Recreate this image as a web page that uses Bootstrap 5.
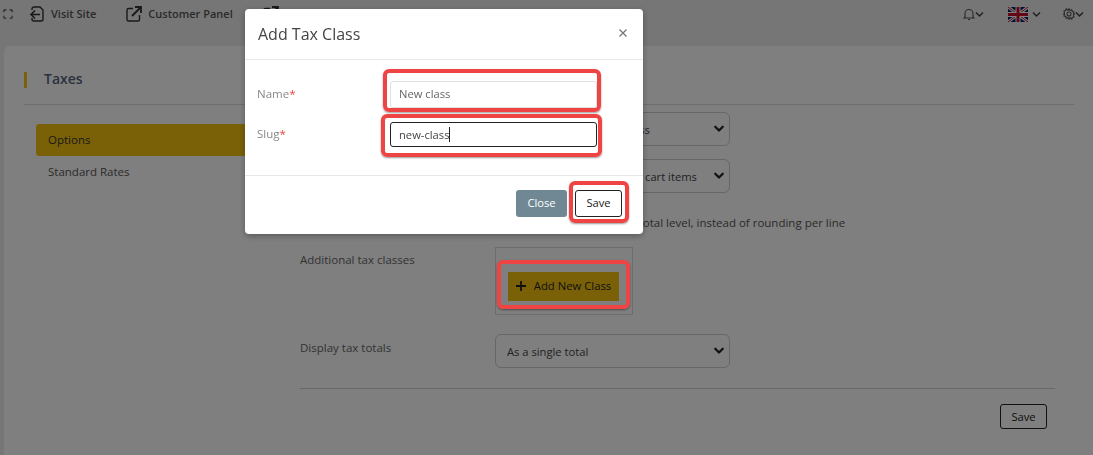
<!DOCTYPE html>
<html lang="en">
<head>
<meta charset="utf-8">
<title>Taxes</title>
<link href="https://cdn.jsdelivr.net/npm/bootstrap@5.3.0/dist/css/bootstrap.min.css" rel="stylesheet">
<style>
html,body{height:455px;overflow:hidden}
body{background:#ececec;font-family:"Open Sans",sans-serif;font-size:11.5px;color:#555}
.topstrip{height:46px;padding:0 9px 18px 3px;color:#555}
.topstrip svg{display:block;flex:none}
.toplink{font-weight:600;font-size:11px;color:#555;text-decoration:none;gap:6px}
.toplink.one{margin-left:16px;gap:7px}
.toplink.two{margin-left:30px}
.toplink.three{margin-left:30px}
.topright{margin-left:auto}
.sheet{background:#fff;margin-left:4px;height:409px;border-radius:6px 0 0 0;padding:26px 19px 0 20px}
.sheet-title{border-bottom:1px solid #dcdcdc;padding-bottom:16px;box-sizing:content-box;height:16px}
.sheet-title h1{font-size:14px;font-weight:600;margin:0;padding:0 0 2px 17px;height:16px;border-left:3px solid #f5c30f;color:#56647a;line-height:14px}
.side{width:245px;padding-left:12px;padding-top:19px;flex:none}
.side a{display:block;height:32px;line-height:32px;padding-left:12px;color:#555;text-decoration:none;border-radius:3px 0 0 3px}
.side a.on{background:#f5c30f;color:#333}
.formcol{width:755px;margin-left:31px;padding-top:7px}
.frow{display:flex}
.frow>label{width:195px;flex:none;color:#666;margin:0}
.sel{width:235px;height:34px;font-size:11.2px;color:#444;padding:2px 20px 0 11px;border-color:#cfcfcf;background-size:14px 12px;background-position:right 3px center;background-image:url("data:image/svg+xml,%3csvg xmlns='http://www.w3.org/2000/svg' viewBox='0 0 16 16'%3e%3cpath fill='none' stroke='%23222' stroke-linecap='round' stroke-linejoin='round' stroke-width='3' d='m3 5 5 5 5-5'/%3e%3c/svg%3e")}
.sel.tight{padding-left:3px}
.checktext{height:16px;line-height:16px;color:#555;padding-left:195px;margin-top:22px;white-space:nowrap;display:flex;align-items:center}
.checktext .form-check-input{margin:0 40px 0 0;width:13px;height:13px;flex:none}
.classbox{width:138px;height:68px;border:1px solid #d8d8d8;padding:24px 0 0 12px}
.addbtn{width:111px;height:29px;background:#f5c30f;color:#222;border:0;border-radius:0;font-size:11.3px;font-weight:500;padding:0 0 2px;line-height:27px;gap:8px}
.outbtn{height:25px;width:47px;padding:0;font-size:11.2px;color:#222;background:#fff;border:1px solid #222;border-radius:3px;line-height:23px}
.divider{height:1px;background:#d0d0d0;margin:20px 0 15px}
.dlg{width:398px;margin:9px 0 0 245px}
.dlg .modal-content{border-radius:4px;border:0;height:225px;box-shadow:0 2px 6px rgba(0,0,0,.3)}
.dlg .modal-header{height:51px;padding:0 13px;border-bottom:1px solid #e8e8e8}
.dlg .modal-title{font-size:16px;font-weight:400;color:#444}
.xbtn{background:none;border:0;padding:0;width:14px;height:14px;display:flex;margin-top:-3px}
.dlg .modal-body{padding:0 12px;height:116px;flex:none;border-bottom:1px solid #e8e8e8;position:relative}
.mrow{display:flex;align-items:center;margin:0}
.mrow label{width:133px;color:#888;margin:0 0 2px;flex:none;font-size:11.5px}
.mrow label span{color:#ef4444}
.fldwrap{position:relative;width:207px}
.fld{font-size:11.2px;color:#666;padding:0 8px;border-radius:3px;min-height:0;box-shadow:none}
.fld-a{height:27px;border:1px solid #e0e0e0;padding-bottom:2px}
.fld-b{height:25px;border:1px solid #222;color:#444}
.mrow.a{padding-top:21px}
.mrow.b{padding-top:14px}
.caret-mark{position:absolute;left:59px;top:5px;width:1px;height:15px;background:#222}
.dlg .modal-footer{padding:14px 21px 0 0;border:0;justify-content:flex-end;align-items:flex-start;gap:8px;flex-wrap:nowrap}
.dlg .modal-footer>*{margin:0}
.closebtn{width:51px;height:27px;padding:0;background:#6f8893;color:#fff;border:0;border-radius:3px;font-size:11.2px}
.savewrap{position:relative;display:block}
.savebtn{width:47px;height:27px;padding:0;background:#fff;color:#222;border:1px solid #222;border-radius:3px;font-size:11.2px;display:block}
.redmark{position:absolute;z-index:1070;border:4px solid #ef4444;border-radius:6px;box-shadow:0 1px 2px rgba(0,0,0,.4);pointer-events:none}
.m-name{left:-7px;right:-4px;top:-12px;bottom:-4px}
.m-slug{left:-9px;right:-5px;top:-8px;bottom:-10px}
.m-save{left:-6px;right:-7px;top:-9px;bottom:-6px}
.m-add{left:-11px;right:-11px;top:-12px;bottom:-8px}
.addwrap{position:relative;display:inline-block}
</style>
</head>
<body>
<div class="topstrip d-flex align-items-center">
  <svg width="10" height="10" viewBox="0 0 12 12" fill="none" stroke="#444" stroke-width="1.300"><path d="M1 4V2a1 1 0 0 1 1-1h2M8 1h2a1 1 0 0 1 1 1v2M11 8v2a1 1 0 0 1-1 1H8M4 11H2a1 1 0 0 1-1-1V8"/></svg>
  <a class="toplink one d-flex align-items-center" href="#">
    <svg width="15" height="17" viewBox="0 0 15 17" fill="none" stroke="#333" stroke-width="1.400"><path d="M3 4V3a2 2 0 0 1 2-2h6l3 3v9a2 2 0 0 1-2 2H5a2 2 0 0 1-2-2v-1"/><path d="M10 8.500H1M5 4.500 1 8.500l4 4" stroke-width="1.600" transform="translate(1 0)"/></svg>
    Visit Site</a>
  <a class="toplink two d-flex align-items-center" href="#">
    <svg width="16" height="16" viewBox="0 0 16 16" fill="none" stroke="#333" stroke-width="1.400"><path d="M7 2.500H2.500a1.500 1.500 0 0 0-1.500 1.500v9.500A1.500 1.500 0 0 0 2.500 15H12a1.500 1.500 0 0 0 1.500-1.500V9"/><path d="M6 10 15 1M9 1h6v6" stroke-width="1.800"/></svg>
    Customer Panel</a>
  <a class="toplink three d-flex" href="#">
    <svg width="16" height="16" viewBox="0 0 16 16" fill="none" stroke="#333" stroke-width="1.400"><path d="M7 2.500H2.500a1.500 1.500 0 0 0-1.500 1.500v9.500A1.500 1.500 0 0 0 2.500 15H12a1.500 1.500 0 0 0 1.500-1.500V9"/><path d="M6 10 15 1M9 1h6v6" stroke-width="1.800"/></svg>
  </a>
  <div class="topright d-flex align-items-center">
    <svg width="12" height="13" viewBox="0 0 12 13" fill="none" stroke="#555" stroke-width="1.100"><path d="M2 9V5.500a4 4 0 0 1 8 0V9l1 1H1zM5 11.500h2"/></svg>
    <svg width="9" height="7" viewBox="0 0 9 7" fill="none" stroke="#444" stroke-width="1.500"><path d="m1 1.500 3.500 3.500L8 1.500"/></svg>
    <svg class="ms-4" width="20" height="15" viewBox="0 0 20 15"><rect width="20" height="15" fill="#012169"/><path d="M0 0 20 15M20 0 0 15" stroke="#fff" stroke-width="3"/><path d="M0 0 20 15M20 0 0 15" stroke="#c8102e" stroke-width="1"/><path d="M10 0v15M0 7.500h20" stroke="#fff" stroke-width="5"/><path d="M10 0v15M0 7.500h20" stroke="#c8102e" stroke-width="3"/></svg>
    <svg class="ms-1" width="9" height="7" viewBox="0 0 9 7" fill="none" stroke="#444" stroke-width="1.500"><path d="m1 1.500 3.500 3.500L8 1.500"/></svg>
    <svg style="margin-left:22px" width="12" height="12" viewBox="0 0 12 12" fill="none" stroke="#555" stroke-width="1.100"><circle cx="6" cy="6" r="2"/><path d="M6 .7 7 2.300l1.800-.5.400 1.800 1.800.4-.5 1.800L11.300 6l-.8 1.200.5 1.800-1.800.4-.4 1.800L7 9.700 6 11.300 5 9.700l-1.800.5-.4-1.800L1 8l.5-1.800L.7 6 1.500 4.800 1 3l1.800-.4.400-1.800L5 2.300z"/></svg>
    <svg width="9" height="7" viewBox="0 0 9 7" fill="none" stroke="#444" stroke-width="1.500"><path d="m1 1.500 3.500 3.500L8 1.500"/></svg>
  </div>
</div>

<div class="sheet">
  <div class="sheet-title"><h1>Taxes</h1></div>
  <div class="d-flex">
    <nav class="side">
      <a class="on" href="#">Options</a>
      <a href="#">Standard Rates</a>
    </nav>
    <div class="formcol">
      <div class="frow"><label>Calculate tax based on</label><select class="form-select sel"><option>Customer shipping address</option></select></div>
      <div class="frow" style="margin-top:13px"><label>Shipping tax class</label><select class="form-select sel tight"><option>Shipping tax class based on cart items</option></select></div>
      <div class="checktext"><input class="form-check-input" type="checkbox">Round tax at subtotal level, instead of rounding per line</div>
      <div class="frow" style="margin-top:16px">
        <label class="pt-1">Additional tax classes</label>
        <div class="classbox">
          <span class="addwrap">
            <button class="btn addbtn d-flex align-items-center justify-content-center" type="button">
              <svg width="10" height="10" viewBox="0 0 10 10" stroke="#222" stroke-width="1.800"><path d="M5 0v10M0 5h10"/></svg>
              Add New Class</button>
            <span class="redmark m-add"></span>
          </span>
        </div>
      </div>
      <div class="frow" style="margin-top:19px"><label style="padding-top:5px">Display tax totals</label><select class="form-select sel"><option>As a single total</option></select></div>
      <div class="divider"></div>
      <div class="d-flex justify-content-end pe-2"><button class="btn outbtn" type="button">Save</button></div>
    </div>
  </div>
</div>

<div class="modal-backdrop show"></div>
<div class="modal d-block" role="dialog">
  <div class="modal-dialog dlg">
    <div class="modal-content">
      <div class="modal-header">
        <h5 class="modal-title">Add Tax Class</h5>
        <button class="xbtn ms-auto" type="button" aria-label="Close"><svg width="14" height="14" viewBox="0 0 14 14" stroke="#777" stroke-width="1.300"><path d="m3.500 3.500 7 7M10.500 3.500l-7 7"/></svg></button>
      </div>
      <div class="modal-body">
        <div class="mrow a"><label>Name<span>*</span></label>
          <div class="fldwrap"><input class="form-control fld fld-a" value="New class"><span class="redmark m-name"></span></div></div>
        <div class="mrow b"><label>Slug<span>*</span></label>
          <div class="fldwrap"><input class="form-control fld fld-b" value="new-class"><span class="caret-mark"></span><span class="redmark m-slug"></span></div></div>
      </div>
      <div class="modal-footer">
        <button class="btn closebtn" type="button">Close</button>
        <span class="savewrap"><button class="btn savebtn" type="button">Save</button><span class="redmark m-save"></span></span>
      </div>
    </div>
  </div>
</div>
<script src="https://cdn.jsdelivr.net/npm/bootstrap@5.3.0/dist/js/bootstrap.bundle.min.js"></script>
</body>
</html>
